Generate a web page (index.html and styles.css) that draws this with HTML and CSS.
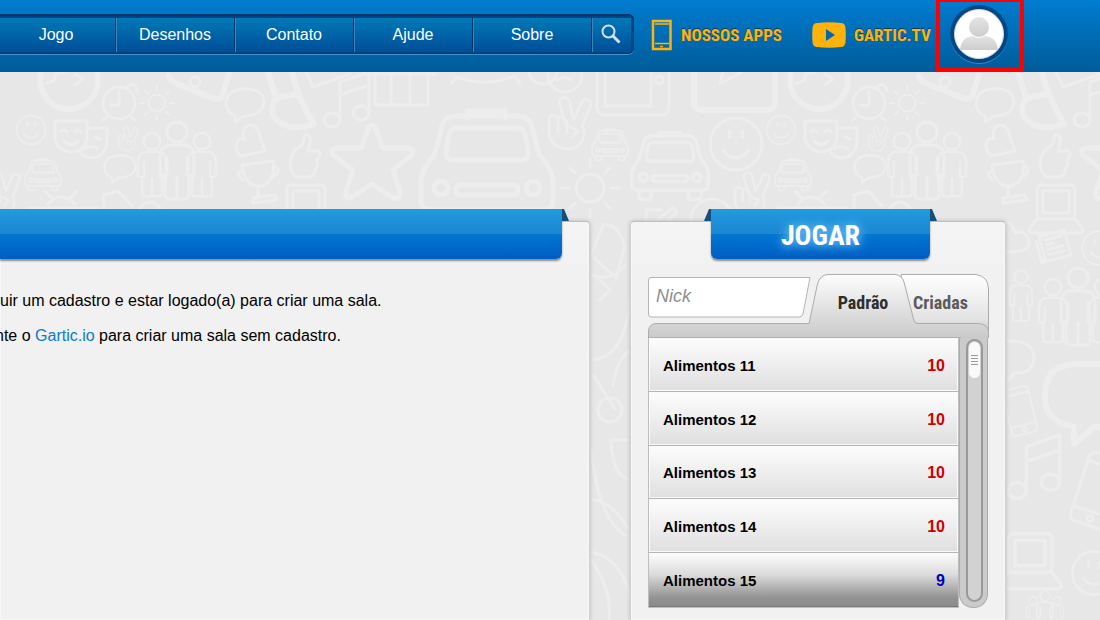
FILE: index.html
```html
<!DOCTYPE html>
<html lang="pt-BR">
<head>
<meta charset="utf-8">
<meta name="viewport" content="width=device-width, initial-scale=1">
<title>Gartic</title>
<link rel="stylesheet" href="styles.css">
</head>
<body>
<svg class="doodles" aria-hidden="true">
  <defs>
    <g id="smile"><circle r="24"/><path d="M-6-12v6M6-12v6M-12 6Q0 20 12 6"/></g>
    <g id="sun"><circle r="14"/><path d="M0-29v8M0 21v8M-29 0h8M21 0h8M-20-20l5 5M15 15l5 5M20-20l-5 5M-15 15l-5 5"/></g>
    <g id="car"><path d="M-20-40v-7h38v7M-31-42H31Q42-42 45-32L52-4Q66 12 66 24V42Q66 52 56 52H-56Q-66 52-66 42V24Q-66 12-52-4L-45-32Q-42-42-31-42ZM-30-30H30Q37-30 39-20L41-6Q41 2 34 2H-34Q-41 2-41-6L-39-20Q-37-30-30-30ZM-26 27H26Q31 27 31 32T26 37H-26Q-31 37-31 32T-26 27ZM-54 52v10q0 6 6 6h10q6 0 6-6V52M32 52v10q0 6 6 6h10q6 0 6-6V52"/><circle cx="-46" cy="30" r="7"/><circle cx="46" cy="30" r="7"/></g>
    <g id="person"><circle cy="-29" r="10"/><path d="M-9-16H9Q17-14 17-4V14H12V34Q12 38 7 38H-7Q-12 38-12 34V14H-17V-4Q-17-14-9-16M-10-4V14M10-4V14M0 16V36"/></g>
    <g id="people"><use href="#person" transform="translate(-25 4) scale(.82)"/><use href="#person" transform="translate(25 4) scale(.82)"/><use href="#person"/></g>
    <g id="hand"><path d="M-2-6L-8-26Q-9-33-4-34Q1-35 3-29L7-10M8-10L16-28Q19-34 24-31Q28-28 25-22L17-2Q22 10 14 18Q6 26-6 22Q-20 18-20 4V-8Q-20-14-15-14T-10-8V4M-10-8Q-9-14-4-12Q0-10 0-4V5M0-3L12 3L6 10"/></g>
    <g id="bubble"><path d="M-10 14Q-20 10-20-1Q-18-15 0-15Q20-15 20 0Q18 13-2 14L-10 20Z"/></g>
    <g id="notes"><path d="M-11 14V-22L18-32V9M-11-9L18-19"/><ellipse cx="-19" cy="16" rx="8" ry="7"/><ellipse cx="10" cy="9" rx="8" ry="7"/></g>
    <g id="phone"><rect x="-20" y="-36" width="40" height="72" rx="6"/><path d="M-20-26h40M-20 22h40"/><circle cy="29" r="3"/></g>
    <g id="laptop"><rect x="-19" y="-17" width="38" height="34" rx="4"/><rect x="-13" y="-11" width="26" height="22"/><path d="M-19 17L-27 27Q-28 31-23 31H23Q28 31 27 27L19 17"/></g>
    <g id="tile">
      <rect x="694" y="40" width="81" height="70" rx="7" class="thick"/><path d="M720 84l4-18 18 6Z"/>
      <circle cx="69" cy="80" r="29" class="thick"/><path d="M46 83Q57 82 55 74L66 72M75 85l8-6-8-5"/>
      <circle cx="119" cy="103" r="16"/><path d="M119 91v14h-8M107 117l-4 3M131 117l4 3M127 87Q134 80 137 91"/>
      <use href="#sun" transform="translate(157 103) scale(.6)"/>
      <path d="M169 76Q170 82 178 84L212 98Q220 101 223 94L229 74" class="thick"/><circle cx="195" cy="82" r="5"/>
      <use href="#bubble" transform="translate(245 103) scale(.95)"/>
      <path d="M268 72L276 98Q264 119 290 127Q304 128 314 124Q298 98 292 72M276 98L298 94" class="thick"/>
      <path d="M306 72L313 87L350 74"/>
      <use href="#notes" transform="translate(351 104)"/>
      <use href="#people" transform="translate(177 161)"/>
      <use href="#smile" transform="translate(31 130) scale(.6)"/>
      <path d="M55 121H87V139Q85 151 71 152Q57 150 55 139ZM61 131q4-3 6 1M75 131q4-3 6 1M64 141q8 7 14 0M89 128H107V144Q103 158 91 158Q84 157 80 152M84 149q8-5 14 0M95 137l5 2"/>
      <use href="#hand" transform="translate(127 141) scale(.42)"/>
      <use href="#car" transform="translate(43 172) scale(.27)" class="wide"/>
      <use href="#bubble" transform="translate(120 167) scale(.78)"/>
      <path d="M241 156Q232 148 239 139Q242 138 244 139Q241 127 250 125Q259 126 260 137L265 151Z"/>
      <path d="M242 165L273 161Q276 180 262 186Q245 188 242 165ZM242 171q-8 2 1 9M275 166q7 4-2 11M258 188v9M253 203v-5l22-3 2 5Z"/>
      <path d="M296 149Q305 145 304 137Q306 132 311 138L308 151H319Q322 154 317 160Q319 166 315 169Q315 177 308 177H296Q284 164 296 149Z"/>
      <path d="M372 125Q375 125 377 132L383 148H408Q417 150 411 156L393 170L400 192Q400 200 393 198L372 184L350 198Q345 199 346 192L353 170L334 156Q328 150 337 148H361L367 132Q369 125 372 125Z" class="medium"/>
      <use href="#laptop" transform="translate(306 202)"/>
      <path d="M375 72V105H428V72M391 72V105M410 72V105M366 74H435M452 83l5-6Q486 88 514 76l6 7" />
      <circle cx="543" cy="70" r="14"/><circle cx="565" cy="75" r="17"/><path d="M557 80q8-5 14 0"/>
      <rect x="597" y="35" width="72" height="80" rx="7"/><path d="M605 72V106H651V72"/><circle cx="659" cy="80" r="4"/>
      <use href="#hand" transform="translate(567 128) scale(.9)"/>
      <use href="#car" transform="translate(487 158)" class="medium"/>
      <use href="#car" transform="translate(610 142) scale(.27)" class="wide"/>
      <use href="#car" transform="translate(670 160) scale(.58)" class="thick"/>
      <use href="#smile" transform="translate(736 144) scale(1.08)"/>
      <use href="#sun" transform="translate(590 188)"/>
      <path d="M646 225V210H662M656 222l17-15 4 5-17 15ZM28 208H98M48 204Q60 190 75 204M45 191l8 8M77 191l-8 8M104 210V195L118 191 132 206M140 208Q150 196 160 208"/>
      <use href="#hand" transform="translate(750 198) scale(.75)"/><use href="#hand" transform="translate(0 198) scale(.75)"/>
      <circle cx="712" cy="220" r="21"/>
      <path d="M591 255L603 225Q617 222 625 245L616 278ZM591 275Q614 282 625 265M591 360Q625 358 630 300M600 300l10-10-12-12"/>
      <circle cx="610" cy="410" r="12"/><path d="M593 375l22 34M613 385Q618 355 632 350M611 440H632V480Q612 478 611 440M591 450Q599 520 625 535M593 500Q610 500 628 528M591 552Q630 560 633 620M591 560Q613 590 609 625"/>
      <path d="M256 252Q285 252 278 239Q274 229 265 233Q261 219 254 224"/>
      <g transform="rotate(-14 304 246)"><rect x="292" y="233" width="26" height="26"/><path d="M288 237v22h8M297 238h16M297 243h7M297 248h16M297 253h16"/></g>
      <use href="#smile" transform="translate(349 248) scale(.7)"/>
      <use href="#person" transform="translate(271 296) scale(.66)"/>
      <use href="#people" transform="translate(328 307)"/>
      <path d="M252 341Q285 338 284 360Q281 374 265 373L254 384"/>
      <path d="M349 364H326Q294 365 295 398Q295 421 324 427V444L344 427H375" class="thick"/>
      <use href="#phone" transform="translate(270 411) rotate(-14) scale(.65)"/>
      <use href="#notes" transform="translate(289 472) scale(1.15)"/>
      <use href="#phone" transform="translate(349 491) rotate(18)"/>
      <use href="#laptop" transform="translate(280 553) scale(1.15)"/>
      <use href="#smile" transform="translate(344 573) scale(.9)"/>
      <use href="#people" transform="translate(295 610) scale(.48)"/>
    </g>
  </defs>
  <use href="#tile"/><use href="#tile" x="750"/>
</svg>

<header class="topbar">
  <nav class="menu">
    <a href="#">Jogo</a><a href="#">Desenhos</a><a href="#">Contato</a><a href="#">Ajude</a><a href="#">Sobre</a>
    <button class="search" type="button" aria-label="Buscar">
      <svg width="20" height="20" viewBox="0 0 20 20" fill="none" stroke="#d3e3f3"><circle cx="7.500" cy="7.500" r="6" stroke-width="2"/><path d="M12 12l6.500 6.500" stroke-width="3"/></svg>
    </button>
  </nav>
  <a class="promo promo-apps" href="#">
    <svg width="22" height="32" viewBox="0 0 22 32" fill="none" stroke="#fdb30b"><path d="M2 2h17.500v28H2z" stroke-width="2.500"/><path d="M4 5h14M4 24.500h14" stroke-width="1.500"/><path d="M9 27.500h3" stroke-width="1.500"/></svg>
    <span>NOSSOS APPS</span>
  </a>
  <a class="promo promo-tv" href="#">
    <svg width="34" height="26" viewBox="0 0 34 26"><path d="M5 1Q17-.5 29 1Q33 1 33.500 6Q34 13 33.500 20Q33 25 29 25Q17 26.500 5 25Q1 25 .5 20Q0 13 .5 6Q1 1 5 1Z" fill="#fdb30b"/><path d="M14 7v12l9-6z" fill="#0467b0"/></svg>
    <span>GARTIC.TV</span>
  </a>
  <a class="profile" href="#" aria-label="Perfil">
    <svg width="60" height="60" viewBox="0 0 60 60">
      <defs><linearGradient id="face" x2="0" y2="1"><stop stop-color="#e4e4e4"/><stop offset="1" stop-color="#cdcdcd"/></linearGradient></defs>
      <circle cx="30" cy="31" r="29" fill="#3c83bd"/><circle cx="30" cy="30" r="29" fill="#004788"/>
      <circle cx="30" cy="30" r="24.500" fill="#fff" stroke="#d5d9df"/>
      <circle cx="30" cy="23" r="10" fill="url(#face)"/><path d="M11 46Q12 33 24 32Q30 36 36 32Q48 33 49 46Z" fill="url(#face)"/>
    </svg>
  </a>
</header>

<main class="page">
  <section class="panel panel-info">
    <div class="ribbon ribbon-wide"></div>
    <div class="info">
      <p>uir um cadastro e estar logado(a) para criar uma sala.</p>
      <p class="cut">nte o <a href="#">Gartic.io</a> para criar uma sala sem cadastro.</p>
    </div>
  </section>

  <section class="panel panel-play">
    <h2 class="ribbon ribbon-play">JOGAR</h2>
    <div class="play">
      <div class="tabs">
        <svg class="tabs-shape" aria-hidden="true" width="342" height="64" viewBox="0 0 342 64">
          <defs>
            <linearGradient id="tab" gradientUnits="userSpaceOnUse" x1="0" y1="0" x2="0" y2="64"><stop stop-color="#fdfdfd"/><stop offset=".6" stop-color="#dedede"/><stop offset="1" stop-color="#cacaca"/></linearGradient>
            <linearGradient id="back" x2="0" y2="1"><stop stop-color="#fff"/><stop offset=".75" stop-color="#e3e3e3"/><stop offset="1" stop-color="#c6c6c6"/></linearGradient>
          </defs>
          <path d="M3 3.500H162L155 40Q154 43 151 43H3Q.5 43 .5 40V6Q.5 3.500 3 3.500Z" fill="#fff" stroke="#b5b5b5"/>
          <path d="M253 .5H328Q340 2 340.500 15V60H262Z" fill="url(#back)" stroke="#acacac"/>
          <path d="M.5 64V57Q1 50 8 49.500H161L169 12Q171 1 180 .5H247Q254 1 256 8L266 47Q267 49.500 270 49.500H330Q340 50 340.500 58V64Z" fill="url(#tab)" stroke="#acacac"/>
          <path d="M1 63.500H313" stroke="#b1b1b1"/>
          <path d="M313 63.500H340" stroke="#cacaca"/>
        </svg>
        <input class="nick" type="text" placeholder="Nick" aria-label="Nick">
        <button class="tab tab-on" type="button">Padrão</button>
        <button class="tab" type="button">Criadas</button>
      </div>
      <div class="rooms">
        <ul class="room-list">
          <li><a href="#">Alimentos 11 <b>10</b></a></li>
          <li><a href="#">Alimentos 12 <b>10</b></a></li>
          <li><a href="#">Alimentos 13 <b>10</b></a></li>
          <li><a href="#">Alimentos 14 <b>10</b></a></li>
          <li><a href="#">Alimentos 15 <b class="free">9</b></a></li>
        </ul>
        <div class="gutter"><div class="track"><div class="thumb"></div></div></div>
      </div>
    </div>
  </section>
</main>
</body>
</html>
```
FILE: styles.css
```css
* { box-sizing: border-box; }

body {
  position: relative;
  display: flex;
  flex-direction: column;
  min-height: 100vh;
  margin: 0;
  overflow: hidden;
  background: #e7e7e7;
  color: #000;
  font: 16px/20px "Liberation Sans", Arial, sans-serif;
}

.doodles {
  position: absolute;
  top: 0;
  left: 0;
  width: 100%;
  height: 100%;
  overflow: hidden;
  fill: none;
  stroke: #ededed;
  stroke-width: 3;
  stroke-linejoin: round;
  stroke-linecap: round;
}
.doodles .medium { stroke-width: 5; }
.doodles .thick { stroke-width: 6; }
.doodles .wide { stroke-width: 7; }

/* Top bar */
.topbar {
  position: relative;
  display: flex;
  align-items: flex-start;
  height: 72px;
  background: linear-gradient(#007cd0, #005c99);
}
.menu {
  display: flex;
  flex: none;
  width: 637px;
  height: 40px;
  margin: 14px 0 0 -3px;
  padding: 4px 3px 2px 0;
  background: #00498b;
  border-radius: 0 6px 6px 0;
  box-shadow: inset 0 2px 2px #003366, inset 0 -1px 1px #003a6c, 0 1px 0 #4791c5;
}
.menu a {
  width: 119px;
  line-height: 33px;
  text-align: center;
  text-decoration: none;
  color: #fff;
}
.menu a, .search {
  background: linear-gradient(#0079b8, #004e97);
  border: 0;
  border-right: 1px solid #003562;
  box-shadow: inset 1px 0 0 #3f83b9;
}
.search {
  flex: 1;
  padding: 0 2px 0 0;
  border-right: 0;
}
.promo {
  display: flex;
  flex: none;
  align-items: center;
  height: 32px;
  margin-top: 19px;
  color: #fdb30b;
  font: bold 17px/34px "Liberation Sans Narrow", "Roboto Condensed", Roboto, sans-serif;
  text-decoration: none;
  text-shadow: 0 -1px 0 #053b66;
}
.promo-apps { width: 161px; margin-left: 17px; gap: 8px; }
.promo-tv { width: 124px; gap: 8px; }
.profile {
  flex: none;
  width: 88px;
  height: 72px;
  padding: 2px 9px 0;
  border: 4px solid #f00;
  border-top-width: 2px;
}
.profile svg { display: block; width: 60px; height: 60px; }

/* Page */
.page {
  position: relative;
  display: flex;
  flex: 1;
  gap: 40px;
  padding: 149px 94px 0 0;
}
.panel {
  background: linear-gradient(#f4f4f4, #f2f2f2 42px, #f1f1f1 42px);
  border: 1px solid #cfcfcf;
  border-top-color: #bcbcbc;
  border-bottom: 0;
  border-radius: 4px 4px 0 0;
  box-shadow: 0 0 4px #b9b9b9, inset 0 0 0 1px #f8f8f8;
}
.panel-info { flex: 1; border-left: 0; border-top-left-radius: 0; }
.panel-play { flex: none; width: 376px; padding: 0 17px; }

.ribbon {
  position: relative;
  height: 50px;
  margin: -13px 0 0;
  background: linear-gradient(#219bdf, #1c86d2 25px, #0077d1 25px, #005dc3);
  box-shadow: 0 2px 2px #8b8b8b;
  color: #fff;
  font: bold 28px/54px "Liberation Sans Narrow", "Roboto Condensed", Roboto, sans-serif;
  text-align: center;
  text-shadow: 0 0 12px #6fc4ff, 0 0 8px #4fa8ec;
}
.ribbon-wide { margin-right: 27px; border-radius: 0 0 6px 0; }
.ribbon-play { margin: -13px 58px 0 63px; border-radius: 0 0 6px 6px; }
.ribbon::after, .ribbon-play::before {
  content: "";
  position: absolute;
  top: 0;
  left: 100%;
  width: 7px;
  height: 12px;
  background: #164f7c;
  clip-path: polygon(0 0, 100% 100%, 0 100%);
}
.ribbon::after { clip-path: polygon(0 0, 2px 0, 100% 100%, 0 100%); }
.ribbon-play::before { left: -7px; clip-path: polygon(5px 0, 100% 0, 100% 100%, 0 100%); }

.info { padding-top: 32px; }
.info p { margin: 0 0 15px; white-space: nowrap; }
.info .cut { margin-left: -5px; }
.info a { color: #0b7bcb; text-decoration: none; }

/* Room picker */
.play { padding-top: 15px; }
.tabs {
  position: relative;
  display: flex;
  height: 64px;
}
.tabs-shape { position: absolute; top: 0; left: 0; }
.nick {
  position: relative;
  width: 162px;
  height: 44px;
  padding: 0 8px;
  border: 0;
  background: none;
  font: italic 18px/20px "Liberation Sans", Arial, sans-serif;
}
.nick::placeholder { color: #8e8e8e; opacity: 1; }
.tab {
  position: relative;
  width: 79px;
  height: 58px;
  padding: 0;
  border: 0;
  background: none;
  color: #5b5b5b;
  font: bold 18px/20px "Liberation Sans Narrow", "Roboto Condensed", Roboto, sans-serif;
}
.tab-on { width: 92px; padding-left: 14px; color: #2d2d2d; }
.tab:last-child { padding-right: 2px; }

.rooms { display: flex; height: 270px; }
.room-list {
  display: flex;
  flex: 1;
  flex-direction: column;
  margin: 0;
  padding: 0;
  list-style: none;
  border: 1px solid #bdbdbd;
  border-top: 0;
}
.room-list li { flex: 1; }
.room-list a {
  display: flex;
  align-items: center;
  justify-content: space-between;
  height: 100%;
  padding: 3px 13px 0 14px;
  background: linear-gradient(#fdfdfd, #dfdfdf);
  border-bottom: 1px solid #b5b5b5;
  box-shadow: inset 0 0 0 1px #fafafa;
  color: #000;
  font-size: 15px;
  font-weight: bold;
  text-decoration: none;
}
.room-list b { color: #c00; font-size: 16px; }
.room-list .free { color: #00b; }
.room-list li:last-child a {
  background: linear-gradient(#fdfdfd, #dcdcdc 40%, #929292 85%, #8a8a8a);
  border-bottom-color: #777;
  box-shadow: none;
}
.gutter {
  width: 29px;
  padding: 1px 4px 5px 6px;
  background: #cbcbcb;
  border: solid #adadad;
  border-width: 0 1px 1px;
  border-radius: 0 0 14px 14px;
}
.track {
  height: 100%;
  padding: 1px;
  background: #d2d2d2;
  border: 2px solid #999;
  border-radius: 9px;
}
.thumb {
  height: 36px;
  background: repeating-linear-gradient(#999 0 1px, transparent 1px 3px) center / 7px 10px no-repeat, #f9f9fb;
  border-radius: 6px;
}
```
